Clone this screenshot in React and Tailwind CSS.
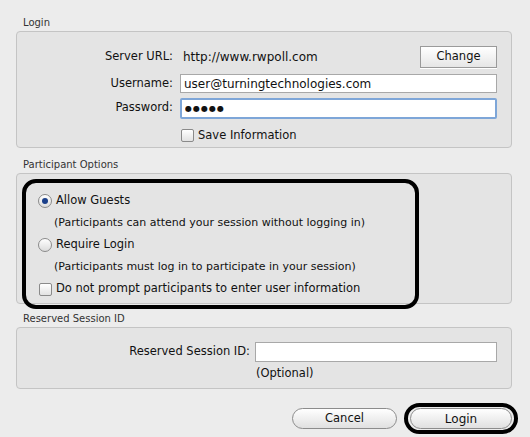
import React from "react";

const font = { fontFamily: '"DejaVu Sans", "Liberation Sans", sans-serif' };

const GroupLabel = ({ children }) => (
  <div className="pl-[7px] text-[10px] leading-[12px] text-[#333]">{children}</div>
);

const Radio = ({ checked }) => (
  <span className="flex h-[14px] w-[14px] items-center justify-center rounded-full border border-[#8a8a8a] bg-gradient-to-b from-white to-[#dcdcdc]">
    {checked && <span className="h-[6px] w-[6px] rounded-full bg-[#1a3f8a]" />}
  </span>
);

const Checkbox = () => (
  <span className="h-[13px] w-[13px] rounded-[2px] border border-[#8a8a8a] bg-gradient-to-b from-white to-[#e2e2e2]" />
);

export default function App() {
  return (
    <div
      style={font}
      className="flex h-[437px] w-[530px] flex-col overflow-hidden bg-[#ececec] pl-[16px] pr-[18px] pt-[17px] text-[11.5px] text-[#111]"
    >
      {/* Login */}
      <GroupLabel>Login</GroupLabel>
      <div className="mt-[2px] h-[117px] rounded-[4px] border border-[#c4c4c4] bg-[#e4e4e4] pr-[14px] pt-[14px]">
        <div className="flex h-[22px] items-center">
          <span className="w-[156px] text-right">Server URL:</span>
          <span className="ml-[10px] flex-1 text-[12px]">http://www.rwpoll.com</span>
          <button className="h-[22px] w-[77px] border border-[#9a9a9a] bg-gradient-to-b from-white to-[#e6e6e6] text-[11.5px] text-[#111] shadow-[0_1px_0_#fff]">
            Change
          </button>
        </div>
        <div className="mt-[6px] flex h-[19px] items-center">
          <span className="w-[156px] text-right">Username:</span>
          <input
            readOnly
            value="user@turningtechnologies.com"
            className="ml-[7px] h-[19px] flex-1 border border-[#a8a8a8] bg-white px-[3px] text-[12px] text-[#111] outline-none"
            style={font}
          />
        </div>
        <div className="mt-[4px] flex h-[22px] items-center">
          <span className="w-[156px] text-right">Password:</span>
          <input
            readOnly
            value="●●●●●"
            className="ml-[7px] h-[21px] flex-1 rounded-[2px] border-2 border-[#7ea6d8] bg-white px-[3px] text-[8px] tracking-[1px] text-[#111] outline-none"
            style={font}
          />
        </div>
        <div className="mt-[8px] flex items-center pl-[164px]">
          <Checkbox />
          <span className="ml-[4px]">Save Information</span>
        </div>
      </div>

      {/* Participant Options */}
      <div className="mt-[11px]">
        <GroupLabel>Participant Options</GroupLabel>
      </div>
      <div className="mt-[2px] h-[131px] rounded-[4px] border border-[#c4c4c4] bg-[#e4e4e4]">
        <div className="ml-[5px] mt-[5px] h-[130px] w-[397px] rounded-[14px] border-4 border-black pl-[12px] pt-[7px]">
          <div className="flex h-[22px] items-center">
            <Radio checked />
            <span className="ml-[4px]">Allow Guests</span>
          </div>
          <div className="flex h-[22px] items-center pl-[16px] text-[11px]">
            (Participants can attend your session without logging in)
          </div>
          <div className="flex h-[22px] items-center">
            <Radio />
            <span className="ml-[4px]">Require Login</span>
          </div>
          <div className="flex h-[22px] items-center pl-[16px] text-[11px]">
            (Participants must log in to participate in your session)
          </div>
          <div className="flex h-[22px] items-center pl-[1px]">
            <Checkbox />
            <span className="ml-[4px]">Do not prompt participants to enter user information</span>
          </div>
        </div>
      </div>

      {/* Reserved Session ID */}
      <div className="mt-[9px]">
        <GroupLabel>Reserved Session ID</GroupLabel>
      </div>
      <div className="mt-[2px] h-[62px] rounded-[4px] border border-[#c4c4c4] bg-[#e4e4e4] pr-[14px] pt-[14px]">
        <div className="flex h-[20px] items-center">
          <span className="w-[233px] text-right">Reserved Session ID:</span>
          <input
            readOnly
            className="ml-[5px] h-[20px] flex-1 border border-[#a8a8a8] bg-white outline-none"
          />
        </div>
        <div className="mt-[3px] pl-[239px] text-[11.5px]">(Optional)</div>
      </div>

      {/* Buttons */}
      <div className="mt-[14px] flex items-center justify-end">
        <button className="h-[21px] w-[105px] rounded-full border border-[#8c8c8c] bg-gradient-to-b from-white to-[#e0e0e0] text-[11.5px] text-[#111]">
          Cancel
        </button>
        <div className="ml-[7px] mr-[-6px] flex h-[31px] w-[114px] items-center justify-center rounded-full border-4 border-black">
          <button className="h-[21px] w-[102px] rounded-full border border-[#8c8c8c] bg-gradient-to-b from-white to-[#e0e0e0] text-[12px] text-[#111]">
            Login
          </button>
        </div>
      </div>
    </div>
  );
}
